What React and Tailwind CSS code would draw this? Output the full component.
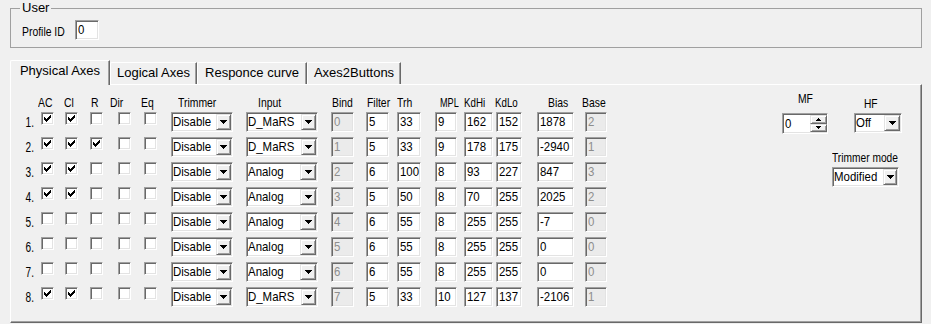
const SUNKEN =
  'border border-t-[#a0a0a0] border-l-[#a0a0a0] border-r-white border-b-white shadow-[inset_1px_1px_0_#696969,inset_-1px_-1px_0_#e3e3e3]';
const RAISED =
  'border border-t-[#e3e3e3] border-l-[#e3e3e3] border-r-[#696969] border-b-[#696969] bg-[#f0f0f0] shadow-[inset_1px_1px_0_#ffffff,inset_-1px_-1px_0_#a0a0a0]';

const ROWS = [
  { n: '1.', ac: true, cl: true, r: false, input: 'D_MaRS', bind: '0', filter: '5', trh: '33', mpl: '9', hi: '162', lo: '152', bias: '1878', base: '2' },
  { n: '2.', ac: true, cl: true, r: true, input: 'D_MaRS', bind: '1', filter: '5', trh: '33', mpl: '9', hi: '178', lo: '175', bias: '-2940', base: '1' },
  { n: '3.', ac: true, cl: true, r: false, input: 'Analog', bind: '2', filter: '6', trh: '100', mpl: '8', hi: '93', lo: '227', bias: '847', base: '3' },
  { n: '4.', ac: true, cl: true, r: false, input: 'Analog', bind: '3', filter: '5', trh: '50', mpl: '8', hi: '70', lo: '255', bias: '2025', base: '2' },
  { n: '5.', ac: false, cl: false, r: false, input: 'Analog', bind: '4', filter: '6', trh: '55', mpl: '8', hi: '255', lo: '255', bias: '-7', base: '0' },
  { n: '6.', ac: false, cl: false, r: false, input: 'Analog', bind: '5', filter: '6', trh: '55', mpl: '8', hi: '255', lo: '255', bias: '0', base: '0' },
  { n: '7.', ac: false, cl: false, r: false, input: 'Analog', bind: '6', filter: '6', trh: '55', mpl: '8', hi: '255', lo: '255', bias: '0', base: '0' },
  { n: '8.', ac: true, cl: true, r: false, input: 'D_MaRS', bind: '7', filter: '5', trh: '33', mpl: '10', hi: '127', lo: '137', bias: '-2106', base: '1' },
];

// left edge of each header label, as widths up to the next one
const HEADERS = [
  { label: 'AC', cls: 'ml-[27px] w-[26px] scale-x-[0.8]' },
  { label: 'Cl', cls: 'w-[27px] scale-x-[0.8]' },
  { label: 'R', cls: 'w-[19px] scale-x-[0.8]' },
  { label: 'Dir', cls: 'w-[31px] scale-x-[0.8]' },
  { label: 'Eq', cls: 'w-[37px] scale-x-[0.8]' },
  { label: 'Trimmer', cls: 'w-[80px] scale-x-[0.8]' },
  { label: 'Input', cls: 'w-[74px] scale-x-[0.8]' },
  { label: 'Bind', cls: 'w-[35px] scale-x-[0.8]' },
  { label: 'Filter', cls: 'w-[30px] scale-x-[0.8]' },
  { label: 'Trh', cls: 'w-[43px] scale-x-[0.8]' },
  { label: 'MPL', cls: 'w-[24px] scale-x-[0.7]' },
  { label: 'KdHi', cls: 'w-[31px] scale-x-[0.75]' },
  { label: 'KdLo', cls: 'w-[53px] scale-x-[0.75]' },
  { label: 'Bias', cls: 'w-[34px] scale-x-[0.8]' },
  { label: 'Base', cls: 'w-[30px] scale-x-[0.8]' },
];

const TABS = [
  { label: 'Physical Axes', cls: 'w-[100px]', active: true },
  { label: 'Logical Axes', cls: 'w-[87px]' },
  { label: 'Responce curve', cls: 'w-[110px]' },
  { label: 'Axes2Buttons', cls: 'w-[94px]' },
];

function ArrowDown() {
  return (
    <svg width="7" height="4" viewBox="0 0 7 4" shapeRendering="crispEdges">
      <path d="M0 0h7v1H0zM1 1h5v1H1zM2 2h3v1H2zM3 3h1v1H3z" fill="#000" />
    </svg>
  );
}

function SmallArrow({ up }) {
  return (
    <svg width="5" height="3" viewBox="0 0 5 3" shapeRendering="crispEdges">
      {up ? (
        <path d="M2 0h1v1H2zM1 1h3v1H1zM0 2h5v1H0z" fill="#000" />
      ) : (
        <path d="M0 0h5v1H0zM1 1h3v1H1zM2 2h1v1H2z" fill="#000" />
      )}
    </svg>
  );
}

function Check({ on, className = '' }) {
  return (
    <div className={`flex h-[13px] w-[13px] shrink-0 items-start bg-white ${SUNKEN} ${className}`}>
      {on && (
        <svg className="ml-[2px] mt-[2px]" width="7" height="7" viewBox="0 0 7 7" shapeRendering="crispEdges">
          <path
            d="M6 0h1v1H6zM5 1h2v1H5zM0 2h1v1H0zM4 2h3v1H4zM0 3h2v1H0zM3 3h3v1H3zM0 4h5v1H0zM1 5h3v1H1zM2 6h1v1H2z"
            fill="#000"
          />
        </svg>
      )}
    </div>
  );
}

function Edit({ v, dis, className = '' }) {
  return (
    <div
      className={`flex h-[20px] shrink-0 items-center ${SUNKEN} ${
        dis ? 'bg-[#ebebeb] text-[#8d8d8d]' : 'bg-white text-black'
      } ${className}`}
    >
      <span className="ml-[2px] origin-left scale-x-[0.88] whitespace-nowrap text-[13px] leading-[16px]">{v}</span>
    </div>
  );
}

function Combo({ v, className = '' }) {
  return (
    <div className={`flex h-[20px] shrink-0 items-center bg-white ${SUNKEN} ${className}`}>
      <span className="ml-[1px] flex-1 origin-left scale-x-[0.88] whitespace-nowrap text-[13px] leading-[16px]">{v}</span>
      <div className={`mr-px flex h-[16px] w-[16px] items-center justify-center ${RAISED}`}>
        <ArrowDown />
      </div>
    </div>
  );
}

function Spin({ v, className = '' }) {
  return (
    <div className={`flex h-[21px] w-[46px] bg-white ${SUNKEN} ${className}`}>
      <span className="ml-[2px] flex-1 origin-left scale-x-[0.88] self-center text-[13px] leading-[16px]">{v}</span>
      <div className="flex w-[17px] flex-col py-px">
        <div className={`flex h-[9px] items-center justify-center ${RAISED}`}>
          <SmallArrow up />
        </div>
        <div className={`flex h-[9px] items-center justify-center ${RAISED}`}>
          <SmallArrow />
        </div>
      </div>
    </div>
  );
}

function AxisRow({ row }) {
  return (
    <div className="flex h-[20px] items-start">
      <span className="w-[23px] shrink-0 origin-right scale-x-[0.72] text-right text-[14px] leading-[20px]">{row.n}</span>
      <Check on={row.ac} className="ml-[7px]" />
      <Check on={row.cl} className="ml-[11px]" />
      <Check on={row.r} className="ml-[12px]" />
      <Check className="ml-[15px]" />
      <Check className="ml-[13px]" />
      <Combo v="Disable" className="ml-[14px] w-[62px]" />
      <Combo v={row.input} className="ml-[13px] w-[72px]" />
      <Edit v={row.bind} dis className="ml-[13px] w-[23px]" />
      <Edit v={row.filter} className="ml-[12px] w-[23px]" />
      <Edit v={row.trh} className="ml-[8px] w-[24px]" />
      <Edit v={row.mpl} className="ml-[14px] w-[22px]" />
      <Edit v={row.hi} className="ml-[7px] w-[29px]" />
      <Edit v={row.lo} className="ml-[3px] w-[26px]" />
      <Edit v={row.bias} className="ml-[15px] w-[37px]" />
      <Edit v={row.base} dis className="ml-[11px] w-[22px]" />
    </div>
  );
}

export default function App() {
  return (
    <div className="h-[324px] w-[931px] overflow-hidden bg-[#f0f0f0] font-['Liberation_Sans',Arial,sans-serif] text-black">
      <fieldset className="ml-[10px] mt-px h-[47px] w-[912px] border border-[#a0a0a0]">
        <legend className="ml-[9px] px-[2px] text-[13px] leading-[14px]">User</legend>
        <div className="ml-[11px] mt-[5px] flex items-start">
          <span className="mt-[4px] w-[53px] shrink-0 origin-left scale-x-[0.8] whitespace-nowrap text-[13px] leading-[15px]">
            Profile ID
          </span>
          <Edit v="0" className="h-[19px] w-[24px]" />
        </div>
      </fieldset>

      <div className="ml-[10px] mt-[12px] flex h-[24px] items-end">
        {TABS.map((t) =>
          t.active ? (
            <div
              key={t.label}
              className={`relative z-10 -mb-px h-[25px] shrink-0 rounded-tl-[2px] border-l border-r border-t border-l-white border-r-[#696969] border-t-white bg-[#f0f0f0] pt-[2px] text-center text-[13px] leading-[15px] shadow-[inset_-1px_0_0_#a0a0a0] ${t.cls}`}
            >
              {t.label}
            </div>
          ) : (
            <div
              key={t.label}
              className={`h-[22px] shrink-0 rounded-tl-[2px] border-l border-r border-t border-l-white border-r-[#696969] border-t-white pt-[2px] text-center text-[13px] leading-[15px] shadow-[inset_-1px_0_0_#a0a0a0] ${t.cls}`}
            >
              {t.label}
            </div>
          )
        )}
      </div>

      <div className="ml-[10px] flex h-[239px] w-[912px] border border-b-[#696969] border-l-white border-r-[#696969] border-t-white shadow-[inset_-1px_-1px_0_#a0a0a0]">
        <div className="flex flex-col pt-[11px]">
          <div className="flex h-[14px] text-[13px] leading-[14px]">
            {HEADERS.map((h) => (
              <span key={h.label} className={`shrink-0 origin-left whitespace-nowrap ${h.cls}`}>
                {h.label}
              </span>
            ))}
          </div>
          <div className="mt-[2px] flex flex-col gap-[5px]">
            {ROWS.map((r) => (
              <AxisRow key={r.n} row={r} />
            ))}
          </div>
        </div>

        <div className="ml-auto mr-[19px] flex flex-col">
          <div className="flex">
            <div className="flex w-[46px] flex-col items-center">
              <span className="mt-[7px] scale-x-[0.8] whitespace-nowrap text-[13px] leading-[14px]">MF</span>
              <Spin v="0" className="mt-[7px]" />
            </div>
            <div className="ml-[26px] flex w-[48px] flex-col">
              <span className="ml-[10px] mt-[12px] origin-left scale-x-[0.85] whitespace-nowrap text-[12px] leading-[14px]">HF</span>
              <Combo v="Off" className="mt-[2px] w-[48px]" />
            </div>
          </div>
          <div className="mr-[3px] mt-[17px] flex w-[67px] flex-col self-end">
            <span className="origin-left scale-x-[0.85] whitespace-nowrap text-[12px] leading-[14px]">Trimmer mode</span>
            <Combo v="Modified" className="mt-[2px] w-[67px]" />
          </div>
        </div>
      </div>
    </div>
  );
}
